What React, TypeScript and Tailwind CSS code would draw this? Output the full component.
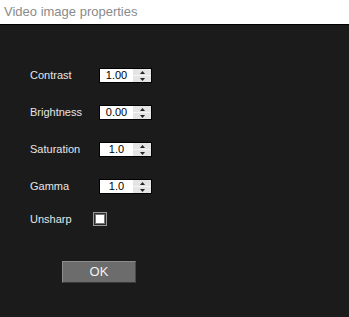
import React from 'react';

const rows = [
  { label: 'Contrast', value: '1.00' },
  { label: 'Brightness', value: '0.00' },
  { label: 'Saturation', value: '1.0' },
  { label: 'Gamma', value: '1.0' },
];

const Spin = ({ value }: { value: string }) => (
  <div className="flex h-[15px] w-[53px] border border-black bg-white">
    <div className="flex flex-1 items-center justify-center text-[11px] leading-none text-black">{value}</div>
    <div className="flex w-[18px] flex-col bg-[#e4e4e4]">
      <div className="flex flex-1 items-center justify-center border-b border-[#f4f4f4]">
        <svg width="5" height="3" viewBox="0 0 5 3"><path d="M2.5 0 L5 3 L0 3 Z" fill="#222" /></svg>
      </div>
      <div className="flex flex-1 items-center justify-center">
        <svg width="5" height="3" viewBox="0 0 5 3"><path d="M0 0 L5 0 L2.5 3 Z" fill="#222" /></svg>
      </div>
    </div>
  </div>
);

export default function App() {
  return (
    <div className="flex h-[317px] w-[349px] flex-col bg-[#1b1b1b] font-['Liberation_Sans',Arial,sans-serif]">
      {/* title bar */}
      <div className="flex h-[24px] items-center bg-white pl-[4px] text-[13px] text-[#8a8a8a]">
        Video image properties
      </div>
      <div className="h-px bg-black" />

      <div className="flex flex-col pt-[32px]">
        {rows.map((r) => (
          <div key={r.label} className="flex h-[37px] items-center pl-[30px]">
            <span className="w-[69px] text-[11px] text-[#e6e6e6]">{r.label}</span>
            <Spin value={r.value} />
          </div>
        ))}
        <div className="flex h-[28px] items-center pl-[30px]">
          <span className="w-[63px] text-[11px] text-[#e6e6e6]">Unsharp</span>
          <div className="h-[14px] w-[14px] border border-[#9a9a9a] bg-[#2a2a2a] p-px">
            <div className="h-full w-full border border-[#777] bg-white" />
          </div>
        </div>
        <div className="pl-[62px] pt-[28px]">
          <button className="flex h-[22px] w-[74px] items-center justify-center border border-[#8c8c8c] border-b-[#3a3a3a] border-r-[#4a4a4a] bg-[#6c6c6c] text-[13px] text-[#f2f2f2]">
            OK
          </button>
        </div>
      </div>
    </div>
  );
}
